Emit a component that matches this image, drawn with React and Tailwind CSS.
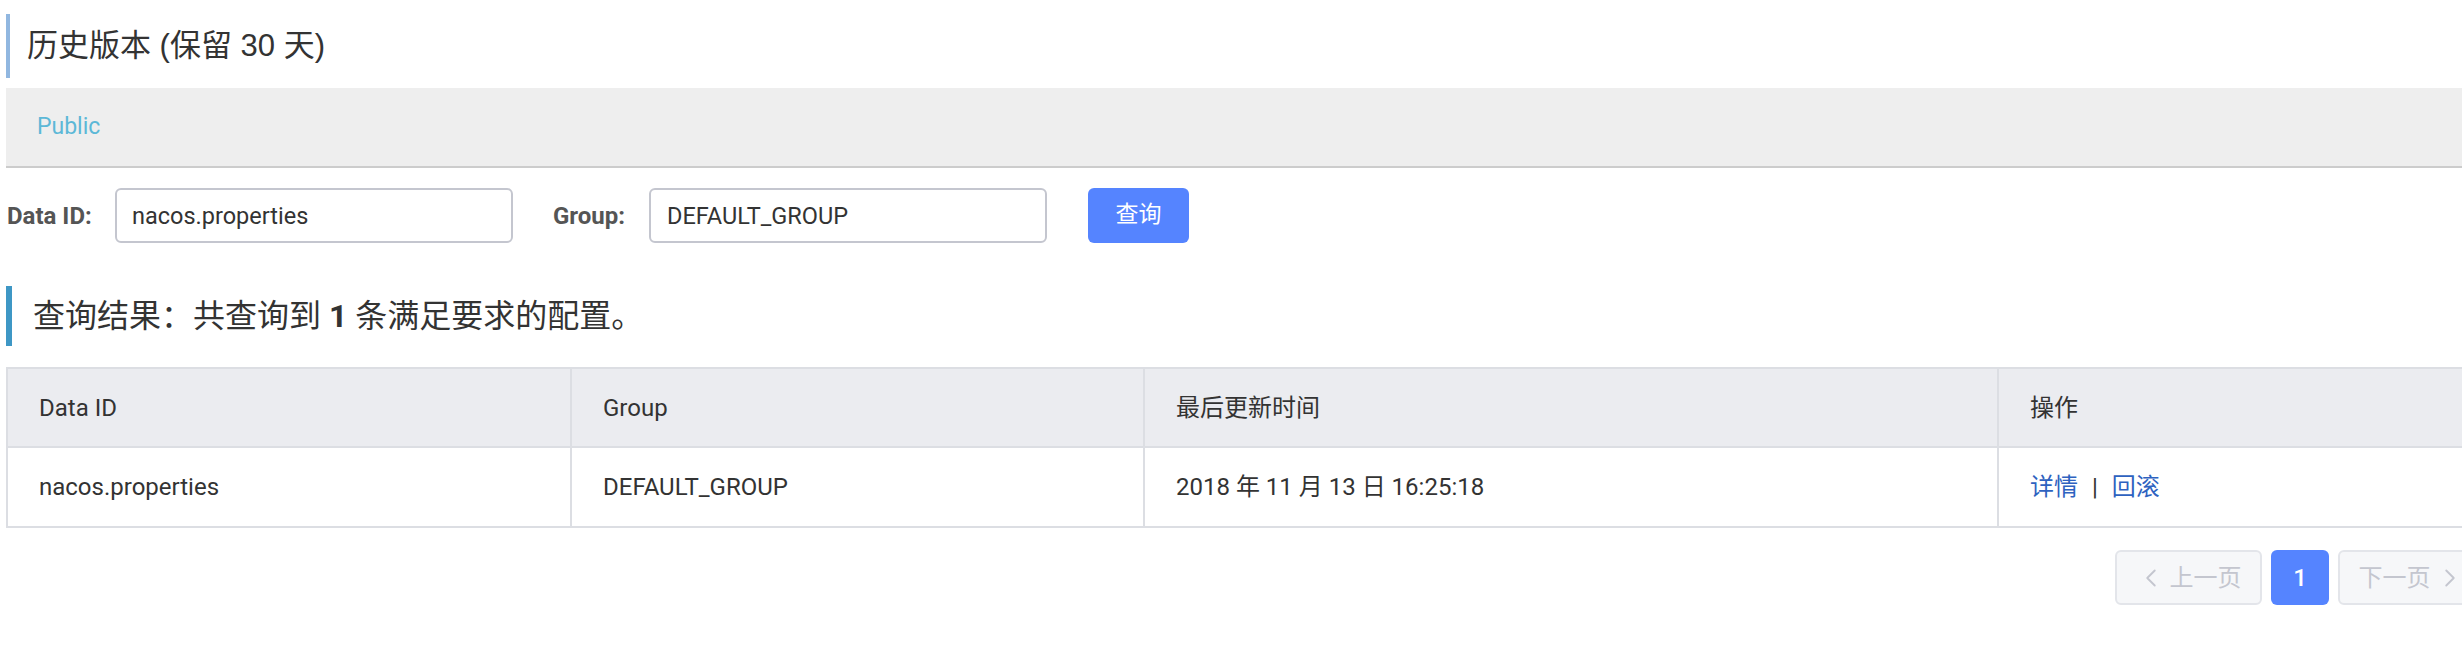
import React from 'react';
import { ChevronLeft, ChevronRight } from 'lucide-react';

const columns = [
    { key: 'dataId', title: 'Data ID', width: 'w-[564px]' },
    { key: 'group', title: 'Group', width: 'w-[573px]' },
    { key: 'time', title: '最后更新时间', width: 'w-[854px]' },
    { key: 'ops', title: '操作', width: '' }
];

const rows = [
    { dataId: 'nacos.properties', group: 'DEFAULT_GROUP', time: '2018 年 11 月 13 日 16:25:18' }
];

const App = () => {
    return (
        <div className="w-[2462px] h-[654px] overflow-hidden bg-white text-[#333] font-[Roboto,'Noto_Sans_CJK_SC',sans-serif]">
            <div className="w-[2492px] pl-[6px]">
                {/* Page title */}
                <div className="mt-[14px] h-[64px] border-l-4 border-[#91b7e0] pl-[17px] flex items-center">
                    <h1 className="text-[31px] text-[#333] font-['Liberation_Sans','Noto_Sans_CJK_SC',sans-serif]">
                        历史版本 (保留 30 天)
                    </h1>
                </div>

                {/* Namespace bar */}
                <div className="mt-[10px] h-[80px] bg-[#eeeeee] border-b-2 border-[#cccccc] pl-[31px] flex items-center">
                    <span className="text-[23px] text-[#5cb8d7]">Public</span>
                </div>

                {/* Search form */}
                <div className="mt-[20px] h-[55px] flex items-center">
                    <label className="ml-[1px] w-[108px] text-[24px] font-bold text-[#555]">Data ID:</label>
                    <input
                        readOnly
                        value="nacos.properties"
                        className="w-[398px] h-[55px] border-2 border-[#c4c6cf] rounded-[6px] px-[15px] text-[23.5px] text-[#333] outline-none"
                    />
                    <label className="ml-[40px] w-[96px] text-[24px] font-bold text-[#555]">Group:</label>
                    <input
                        readOnly
                        value="DEFAULT_GROUP"
                        className="w-[398px] h-[55px] border-2 border-[#c4c6cf] rounded-[6px] px-[16px] text-[23.5px] text-[#333] outline-none"
                    />
                    <button className="ml-[41px] w-[101px] h-[55px] rounded-[6px] bg-[#5584ff] text-white text-[23px]">
                        查询
                    </button>
                </div>

                {/* Result heading */}
                <div className="mt-[43px] h-[60px] border-l-[6px] border-[#3e97c5] pl-[21px] flex items-center">
                    <h2 className="text-[32px] text-[#333]">
                        查询结果：共查询到 <b className="font-bold">1</b> 条满足要求的配置。
                    </h2>
                </div>

                {/* Table */}
                <table className="mt-[21px] w-[2486px] table-fixed border-collapse border-2 border-[#dcdee3] text-[24px]">
                    <thead>
                        <tr className="h-[79px] bg-[#ebecf0]">
                            {columns.map((col) => (
                                <th
                                    key={col.key}
                                    className={`${col.width} border-2 border-[#dcdee3] px-[31px] text-left font-normal text-[#333]`}
                                >
                                    {col.title}
                                </th>
                            ))}
                        </tr>
                    </thead>
                    <tbody>
                        {rows.map((row) => (
                            <tr key={row.dataId} className="h-[80px]">
                                <td className="border-2 border-[#dcdee3] px-[31px]">{row.dataId}</td>
                                <td className="border-2 border-[#dcdee3] px-[31px]">{row.group}</td>
                                <td className="border-2 border-[#dcdee3] px-[31px]">{row.time}</td>
                                <td className="border-2 border-[#dcdee3] px-[31px]">
                                    <a className="text-[#2e62c0] cursor-pointer">详情</a>
                                    <span className="mx-[14px] text-[#333]">|</span>
                                    <a className="text-[#2e62c0] cursor-pointer">回滚</a>
                                </td>
                            </tr>
                        ))}
                    </tbody>
                </table>

                {/* Pagination */}
                <div className="mt-[22px] pr-[7px] flex justify-end gap-[9px]">
                    <button className="w-[147px] h-[55px] rounded-[6px] border-2 border-[#e3e5ea] bg-[#f6f7f9] text-[#c4c6cf] text-[24px] flex items-center justify-center gap-[4px]">
                        <ChevronLeft className="w-[30px] h-[30px]" strokeWidth={1.5} />
                        上一页
                    </button>
                    <button className="w-[58px] h-[55px] rounded-[6px] bg-[#5584ff] text-white text-[24px] font-medium">
                        1
                    </button>
                    <button className="w-[147px] h-[55px] rounded-[6px] border-2 border-[#e3e5ea] bg-[#f6f7f9] text-[#c4c6cf] text-[24px] flex items-center justify-center gap-[4px]">
                        下一页
                        <ChevronRight className="w-[30px] h-[30px]" strokeWidth={1.5} />
                    </button>
                </div>
            </div>
        </div>
    );
};

export default App;
